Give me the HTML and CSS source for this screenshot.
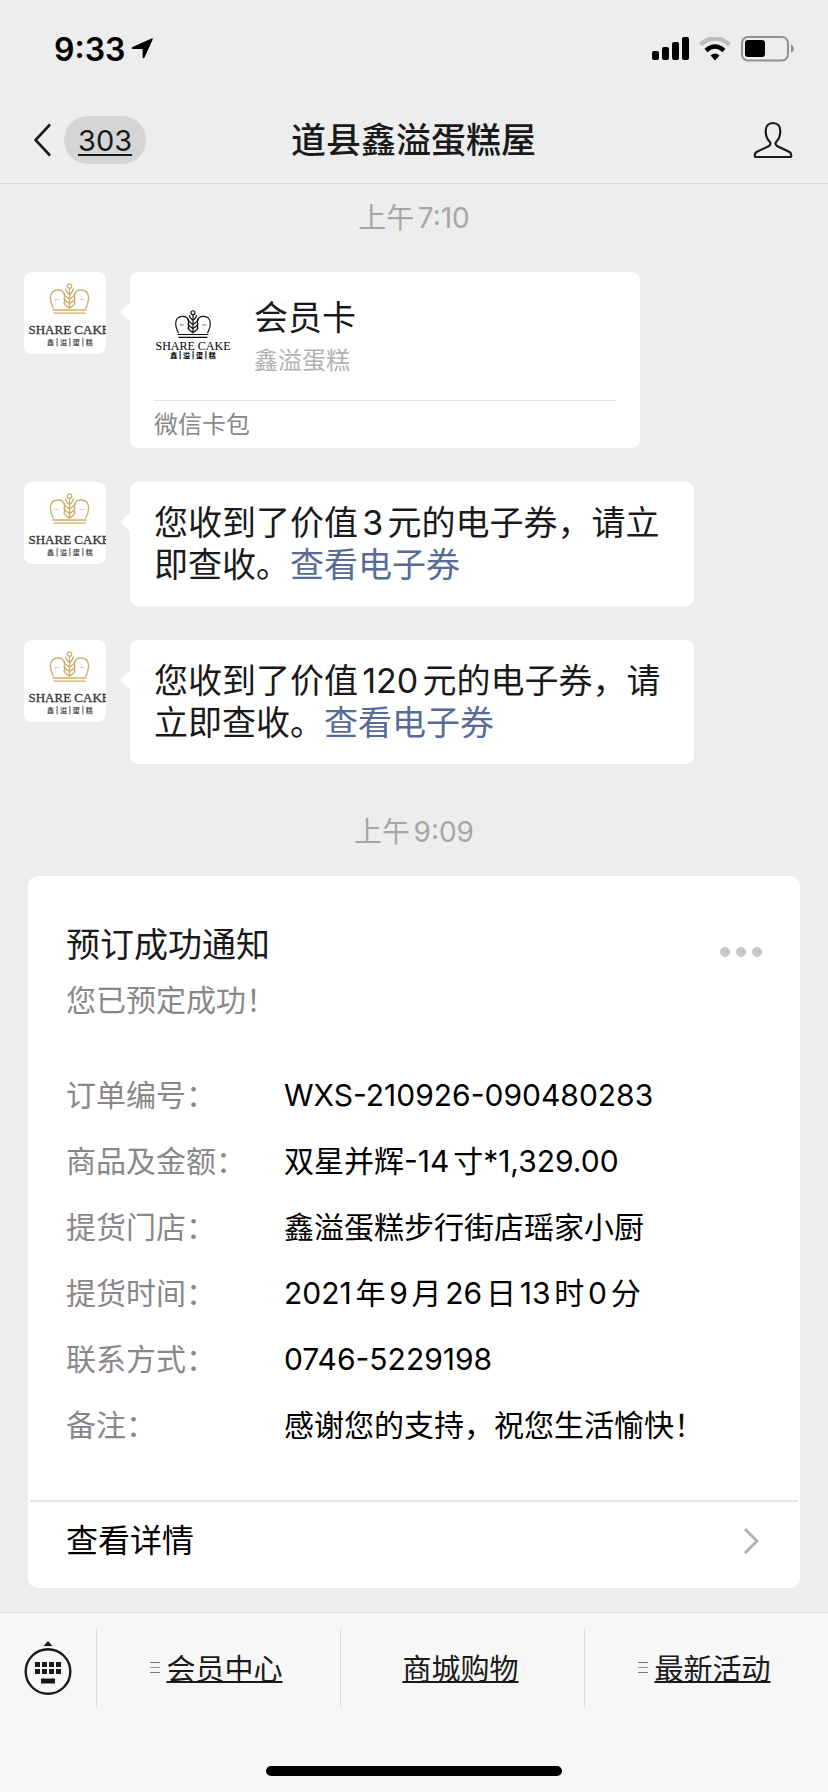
FILE: index.html
```html
<!DOCTYPE html>
<html lang="zh-CN">
<head>
  <meta charset="UTF-8">
  <meta name="viewport" content="width=device-width, initial-scale=1.0">
  <title>道县鑫溢蛋糕屋</title>
  <link rel="stylesheet" href="styles.css">
</head>
<body>

<!-- Shared logo shape -->
<svg class="defs" width="0" height="0" aria-hidden="true">
  <symbol id="crown" viewBox="0 0 40 32">
    <g fill="none" stroke="currentColor" stroke-width="1.3">
      <path d="M4 25.500C-1 16 0 7.500 8 7C12 6.800 14.500 9 15 12M36 25.500C41 16 40 7.500 32 7C28 6.800 25.500 9 25 12"/>
      <path d="M3 27h34M4 30.200h32"/>
      <circle cx="20" cy="3" r="2.200"/>
      <path d="M20 5v21M16 5.500c0 3 1.500 4 4 6c2.500-2 4-3 4-6M14.500 10c0 3 2.500 4 5.500 6c3-2 5.500-3 5.500-6M14.500 14.500c0 3 2.500 4 5.500 6c3-2 5.500-3 5.500-6M14.500 19c0 3 2.500 4 5.500 6c3-2 5.500-3 5.500-6"/>
      <path d="M15 10v11M25 10v11"/>
      <path d="M5 16.500h5M30 16.500h5" stroke-width="0.600"/>
    </g>
  </symbol>
</svg>

<!-- Status Bar -->
<div class="status-bar">
  <div class="status-left">
    <span class="clock">9:33</span>
    <svg width="22" height="22" viewBox="0 0 22 22"><path d="M20.500 0.500C21.500 0 22 1 21.600 1.800L13.500 19.500C13 20.600 11.600 20.400 11.600 19.200V11H2C0.500 11 0.300 9.500 1.500 9Z"/></svg>
  </div>
  <div class="status-right">
    <svg width="37" height="24" viewBox="0 0 37 24">
      <rect x="0" y="14" width="7" height="9" rx="2"/>
      <rect x="10" y="10" width="7" height="13" rx="2"/>
      <rect x="20" y="5" width="7" height="18" rx="2"/>
      <rect x="30" y="0" width="7" height="23" rx="2"/>
    </svg>
    <svg width="32" height="24" viewBox="0 0 32 24">
      <path d="M1.500 7.500Q16-4.500 30.500 7.500" fill="none" stroke="#bdbdbd" stroke-width="4.500"/>
      <path d="M7 13.500Q16 5.500 25 13.500" fill="none" stroke="#000" stroke-width="4.500"/>
      <path d="M11.500 18.500Q16 14.500 20.500 18.500L16 23.500Z"/>
    </svg>
    <svg width="54" height="26" viewBox="0 0 54 26">
      <rect x="1" y="1" width="46" height="23.500" rx="6" fill="none" stroke="#919191" stroke-width="2"/>
      <rect x="4" y="4" width="20" height="17" rx="3"/>
      <path d="M50 8.500Q53 10 53 12.800Q53 15.500 50 17Z" fill="#919191"/>
    </svg>
  </div>
</div>

<!-- Nav Bar -->
<header class="nav-bar">
  <a class="back" href="#">
    <svg width="18" height="34" viewBox="0 0 18 34"><path d="M16 1.500L1.500 17L16 32.500" fill="none" stroke="#1a1a1a" stroke-width="2.600"/></svg>
    <span class="unread">303</span>
  </a>
  <h1>道县鑫溢蛋糕屋</h1>
  <button class="profile" type="button" aria-label="公众号资料">
    <svg width="40" height="38" viewBox="0 0 40 38"><path d="M20 2C24.700 2 27.300 5.500 27.300 10C27.300 14 26.500 17.500 23.500 20.500C22 22 22.500 24 24 25L36.500 31C38 32 38.300 33 38.300 34.500Q38.300 36 36.800 36H3.200Q1.700 36 1.700 34.500C1.700 33 2 32 3.500 31L16 25C17.500 24 18 22 16.500 20.500C13.500 17.500 12.700 14 12.700 10C12.700 5.500 15.300 2 20 2Z" fill="none" stroke="#1a1a1a" stroke-width="2.200"/></svg>
  </button>
</header>

<!-- Messages -->
<main class="chat">
  <div class="time">上午7:10</div>

  <div class="message">
    <svg class="avatar" viewBox="0 0 82 82">
      <use href="#crown" x="25" y="11" width="41" height="32" color="#cfae6a"/>
      <text x="4.500" y="62" class="logo-name">SHARE CAKE</text>
      <text x="23" y="72.500" class="logo-sub">鑫 | 溢 | 蛋 | 糕</text>
    </svg>
    <div class="bubble member-card">
      <div class="member-top">
        <svg width="74" height="50" viewBox="0 0 74 50">
          <use href="#crown" x="18" y="0" width="38" height="29" color="#111"/>
          <text x="37" y="40" class="card-logo-name">SHARE CAKE</text>
          <text x="37" y="48" class="card-logo-sub">鑫 | 溢 | 蛋 | 糕</text>
        </svg>
        <div>
          <h2>会员卡</h2>
          <p>鑫溢蛋糕</p>
        </div>
      </div>
      <div class="member-foot">微信卡包</div>
    </div>
  </div>

  <div class="message">
    <svg class="avatar" viewBox="0 0 82 82">
      <use href="#crown" x="25" y="11" width="41" height="32" color="#cfae6a"/>
      <text x="4.500" y="62" class="logo-name">SHARE CAKE</text>
      <text x="23" y="72.500" class="logo-sub">鑫 | 溢 | 蛋 | 糕</text>
    </svg>
    <div class="bubble text">您收到了价值3元的电子券，请立即查收。<a href="#">查看电子券</a></div>
  </div>

  <div class="message">
    <svg class="avatar" viewBox="0 0 82 82">
      <use href="#crown" x="25" y="11" width="41" height="32" color="#cfae6a"/>
      <text x="4.500" y="62" class="logo-name">SHARE CAKE</text>
      <text x="23" y="72.500" class="logo-sub">鑫 | 溢 | 蛋 | 糕</text>
    </svg>
    <div class="bubble text">您收到了价值120元的电子券，请立即查收。<a href="#">查看电子券</a></div>
  </div>

  <div class="time second">上午9:09</div>

  <section class="order">
    <div class="order-body">
      <div class="order-head">
        <h2>预订成功通知</h2>
        <button class="more" type="button" aria-label="更多"><i></i><i></i><i></i></button>
      </div>
      <p class="order-note">您已预定成功！</p>
      <dl>
        <dt>订单编号：</dt><dd>WXS-210926-090480283</dd>
        <dt>商品及金额：</dt><dd>双星并辉-14寸*1,329.00</dd>
        <dt>提货门店：</dt><dd>鑫溢蛋糕步行街店瑶家小厨</dd>
        <dt>提货时间：</dt><dd>2021年9月26日13时0分</dd>
        <dt>联系方式：</dt><dd>0746-5229198</dd>
        <dt>备注：</dt><dd>感谢您的支持，祝您生活愉快！</dd>
      </dl>
    </div>
    <a class="order-link" href="#">
      <span>查看详情</span>
      <svg width="16" height="28" viewBox="0 0 16 28"><path d="M2 2L14 14L2 26" fill="none" stroke="#b2b2b2" stroke-width="3"/></svg>
    </a>
  </section>
</main>

<!-- Bottom Menu -->
<footer class="toolbar">
  <div class="menu">
    <button class="keyboard" type="button" aria-label="键盘">
      <svg width="48" height="56" viewBox="0 0 48 56">
        <path d="M24 1L28.500 6H19.500Z" fill="#1a1a1a"/>
        <circle cx="24" cy="31.500" r="22.300" fill="none" stroke="#1a1a1a" stroke-width="2.400"/>
        <path d="M11 22h5v5h-5zM18 22h5v5h-5zM25 22h5v5h-5zM32 22h5v5h-5zM11 29h5v5h-5zM18 29h5v5h-5zM25 29h5v5h-5zM32 29h5v5h-5zM17 38.500h14v5H17z" fill="#1a1a1a"/>
      </svg>
    </button>
    <button class="menu-item" type="button"><i class="lines"></i><span>会员中心</span></button>
    <button class="menu-item" type="button"><span>商城购物</span></button>
    <button class="menu-item" type="button"><i class="lines"></i><span>最新活动</span></button>
  </div>
  <div class="home-bar"></div>
</footer>

</body>
</html>
```

FILE: styles.css
```css
* {
  box-sizing: border-box;
}

body {
  margin: 0;
  min-height: 100vh;
  display: flex;
  flex-direction: column;
  background-color: #ededed;
  color: #1a1a1a;
  font-family: Inter, "Noto Sans CJK SC", sans-serif;
  text-autospace: normal;
}

h1, h2, p, dl, dd {
  margin: 0;
  font-weight: 400;
}

a {
  color: inherit;
  text-decoration: none;
}

button {
  background: none;
  border: none;
  padding: 0;
  color: inherit;
  font-family: inherit;
  cursor: pointer;
}

svg {
  display: block;
  flex: none;
}

.defs {
  position: absolute;
}

/* Status Bar */
.status-bar {
  height: 98px;
  padding: 0 33px 0 54px;
  display: flex;
  justify-content: space-between;
  align-items: center;
}

.status-left,
.status-right {
  display: flex;
  align-items: center;
  gap: 6px;
}

.status-right {
  gap: 10px;
}

.clock {
  color: #000;
  font-size: 32px;
  font-weight: 600;
}

/* Nav Bar */
.nav-bar {
  height: 86px;
  padding: 0 35px 2px 34px;
  display: grid;
  grid-template-columns: 1fr auto 1fr;
  align-items: center;
  border-bottom: 1px solid #d5d5d5;
}

.back {
  display: flex;
  align-items: center;
  gap: 12px;
}

.unread {
  height: 48px;
  padding: 0 14px;
  border-radius: 24px;
  background-color: #d5d5d5;
  font-size: 29px;
  line-height: 50px;
  text-decoration: underline;
  text-decoration-thickness: 2px;
  text-underline-offset: 3px;
}

.nav-bar h1 {
  font-size: 35px;
  font-weight: 500;
  line-height: 50px;
}

.profile {
  justify-self: end;
}

/* Messages */
.chat {
  flex: 1;
}

.time {
  margin: 14px 0 34px;
  color: #a6a6a6;
  font-size: 28px;
  line-height: 40px;
  text-align: center;
}

.time.second {
  margin: 48px 0 24px;
}

.message {
  display: flex;
  gap: 24px;
  padding: 0 24px;
  margin-bottom: 34px;
}

.avatar {
  width: 82px;
  height: 82px;
  border-radius: 8px;
  background-color: #fff;
}

.logo-name {
  font-family: "Liberation Serif", serif;
  font-size: 13px;
  fill: #333;
  stroke: #333;
  stroke-width: 0.3px;
}

.logo-sub {
  font-size: 7px;
  font-weight: 700;
  fill: #555;
}

.bubble {
  position: relative;
  max-width: 564px;
  border-radius: 8px;
  background-color: #fff;
}

.bubble::before {
  content: "";
  position: absolute;
  top: 31px;
  left: -6px;
  width: 18px;
  height: 18px;
  border-radius: 2px;
  background-color: #fff;
  transform: rotate(45deg);
}

.bubble.text {
  padding: 20px 24px;
  font-size: 34px;
  line-height: 42px;
}

.bubble.text a {
  color: #576b95;
}

.member-card {
  width: 510px;
  padding: 0 24px;
}

.member-top {
  height: 129px;
  padding: 20px 0 0 2px;
  display: flex;
  align-items: flex-start;
  gap: 24px;
  border-bottom: 1px solid #e5e5e5;
}

.member-top svg {
  margin-top: 18px;
}

.member-top h2 {
  font-size: 34px;
  line-height: 52px;
}

.member-top p {
  color: #b2b2b2;
  font-size: 24px;
  line-height: 34px;
}

.card-logo-name {
  font-family: "Liberation Serif", serif;
  font-size: 12px;
  text-anchor: middle;
  fill: #000;
}

.card-logo-sub {
  font-size: 7px;
  font-weight: 700;
  text-anchor: middle;
  fill: #000;
}

.member-foot {
  color: #888;
  font-size: 24px;
  line-height: 47px;
}

/* Order notice */
.order {
  margin: 0 28px 24px;
  border-radius: 10px;
  background-color: #fff;
}

.order-body {
  margin: 0 2px;
  padding: 44px 36px 42px;
  border-bottom: 2px solid #e5e5e5;
}

.order-head {
  display: flex;
  justify-content: space-between;
  align-items: center;
}

.order-head h2 {
  font-size: 34px;
  line-height: 50px;
}

.more {
  padding-top: 14px;
  display: flex;
  gap: 6px;
}

.more i {
  width: 10px;
  height: 10px;
  border-radius: 50%;
  background-color: #c7c7cc;
}

.order-note {
  color: #888;
  font-size: 30px;
  line-height: 60px;
}

.order dl {
  margin-top: 32px;
  display: grid;
  grid-template-columns: 218px 1fr;
  font-size: 30px;
  line-height: 66px;
}

.order dt {
  color: #888;
}

.order dd {
  color: #000;
}

.order-link {
  padding: 0 41px 8px 38px;
  display: flex;
  justify-content: space-between;
  align-items: center;
  color: #000;
  font-size: 32px;
  line-height: 78px;
}

/* Bottom Menu */
.toolbar {
  padding: 15px 0 16px;
  border-top: 1px solid #dcdcdc;
  background-color: #f7f7f7;
}

.menu {
  height: 80px;
  display: flex;
}

.keyboard {
  width: 96px;
  padding: 0 24px;
}

.menu-item {
  flex: 1;
  padding: 0 4px 2px 0;
  display: flex;
  justify-content: center;
  align-items: center;
  gap: 6px;
  border-left: 1px solid #dcdcdc;
  font-size: 29px;
}

.menu-item span {
  text-decoration: underline;
  text-decoration-thickness: 2px;
  text-decoration-skip-ink: none;
}

.lines {
  width: 10px;
  height: 11px;
  border-top: 1px solid #777;
  border-bottom: 1px solid #777;
  background: linear-gradient(#999, #999) center / 10px 1px no-repeat;
}

.home-bar {
  width: 296px;
  height: 10px;
  margin: 58px auto 0;
  border-radius: 5px;
  background-color: #000;
}
```
